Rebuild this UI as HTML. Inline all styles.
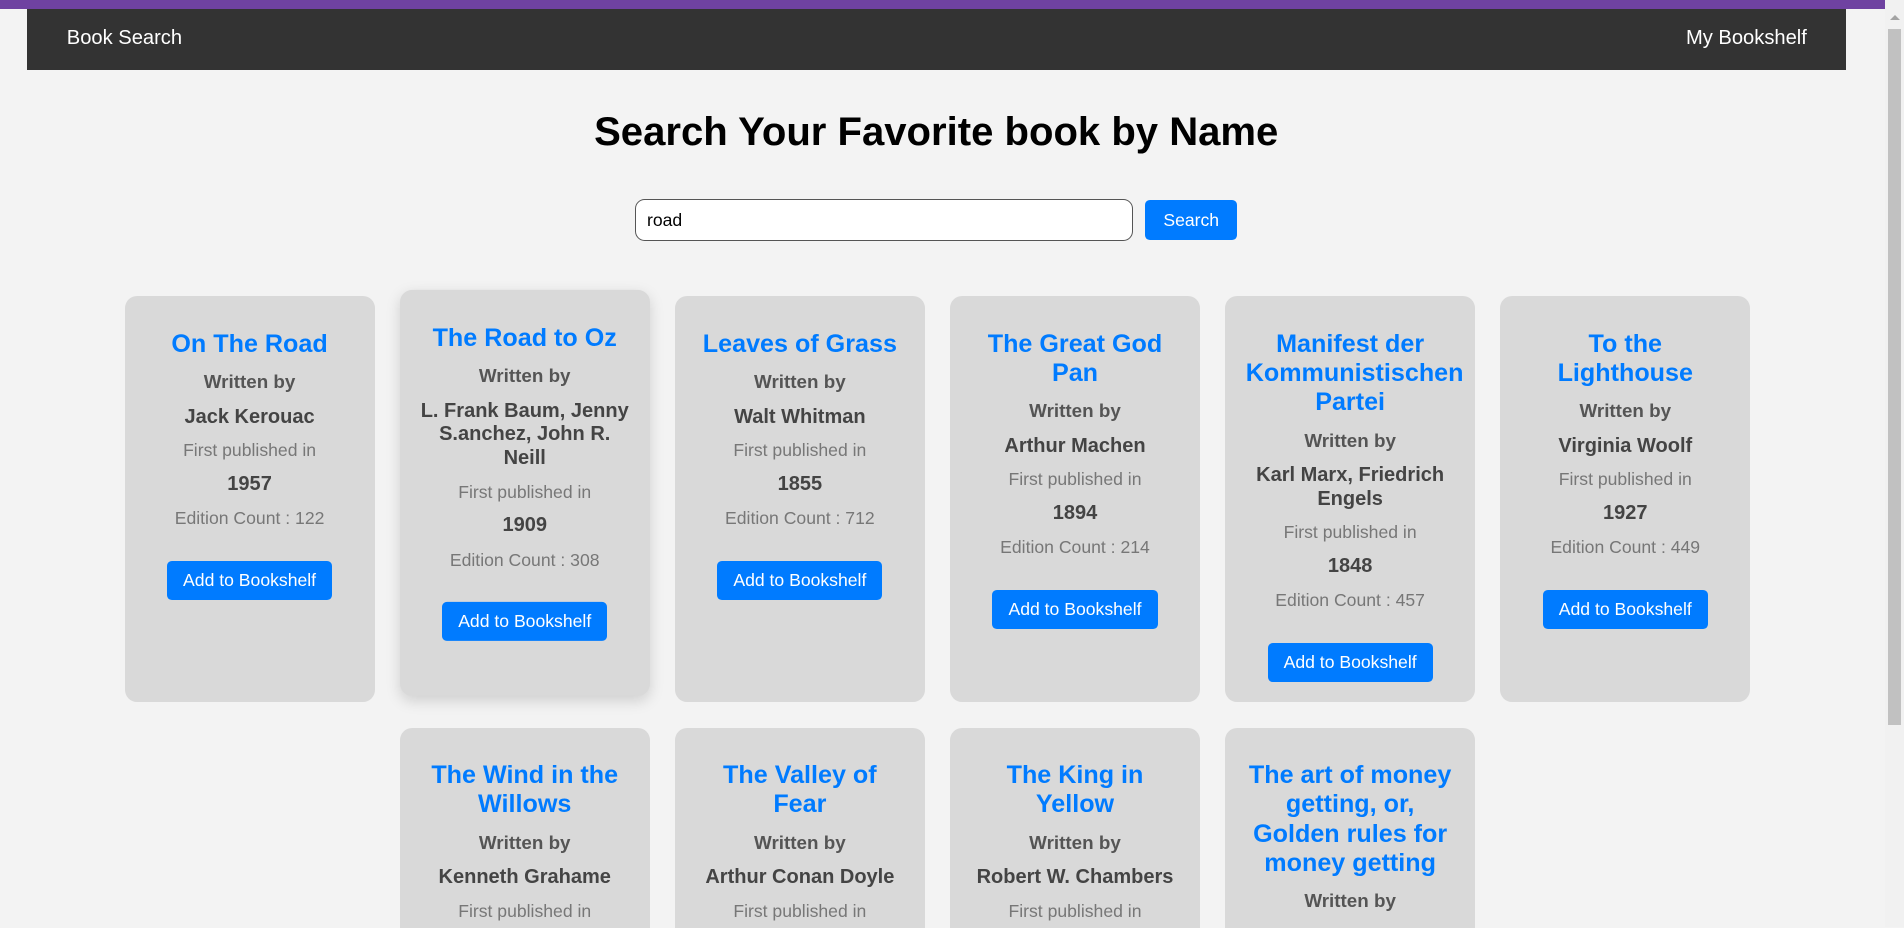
<!DOCTYPE html>
<html><head><meta charset="utf-8"><style>
html,body{margin:0;padding:0;width:1904px;height:927px;overflow:hidden;background:#f3f3f3;font-family:"Liberation Sans",Arial,sans-serif}
#z{zoom:1.2143;position:absolute;left:0;top:0;width:1568px;height:764px;overflow:hidden}
.purple{position:absolute;left:0;top:0;width:1568px;height:7px;background:#6f42a1}
.nav{position:absolute;left:22px;top:7px;width:1498px;height:51px;background:#333;color:#fff;font-size:16.6px}
.nav .l{position:absolute;left:33px;top:15.5px}
.nav .r{position:absolute;right:32px;top:15.5px}
h1{position:absolute;left:0;width:1542px;top:89px;margin:0;text-align:center;font-size:33px;line-height:40px;color:#000}
.inp{position:absolute;left:523px;top:164px;width:408px;height:32.5px;border:1.5px solid #555;border-radius:8px;background:#fff;font-size:14.5px;line-height:32px;box-sizing:content-box}
.inp span{position:absolute;left:9px;top:1px}
.sbtn{position:absolute;left:943px;top:165px;width:76px;height:33px;background:#007bff;border-radius:4px;color:#fff;font-size:14.5px;text-align:center;line-height:33px}
.grid{position:absolute;left:1px;top:244px;width:1542px;display:flex;flex-wrap:wrap;justify-content:center;column-gap:20.6px;row-gap:21px}
.card{width:206px;min-height:333px;background:#d9d9d9;border-radius:10px;box-sizing:border-box;padding:27.5px 17px 17px;text-align:center}
.card.h{transform:translateY(-5px);box-shadow:0 4px 12px rgba(0,0,0,.15)}
.t{font-size:20.7px;font-weight:bold;line-height:24px;color:#007bff}
.w{font-size:15.5px;font-weight:bold;line-height:19px;color:#555;margin-top:9.5px}
.a{font-size:16.5px;font-weight:bold;line-height:19.5px;color:#444;margin-top:10px}
.f{font-size:14.5px;line-height:17px;color:#777;margin-top:9px}
.y{font-size:16.5px;font-weight:bold;line-height:19px;color:#444;margin-top:10px}
.e{font-size:14.5px;line-height:17px;color:#777;margin-top:10px}
.b{display:inline-block;margin-top:26.5px;width:136px;height:32px;line-height:32px;background:#007bff;color:#fff;font-size:14.5px;border-radius:4px}
.sb{position:absolute;left:1885px;top:0;width:19px;height:927px;background:#f1f1f1}
.th{position:absolute;left:3px;top:29px;width:13px;height:696px;background:#c1c1c1}
.ar{position:absolute;left:5px;top:15px;width:0;height:0;border-left:5px solid transparent;border-right:5px solid transparent;border-bottom:5px solid #a3a3a3}
</style></head><body>
<div id="z">
<div class="purple"></div>
<div class="nav"><span class="l">Book Search</span><span class="r">My Bookshelf</span></div>
<h1>Search Your Favorite book by Name</h1>
<div class="inp"><span>road</span></div>
<div class="sbtn">Search</div>
<div class="grid">
<div class="card"><div class="t">On The Road</div><div class="w">Written by</div><div class="a">Jack Kerouac</div><div class="f">First published in</div><div class="y">1957</div><div class="e">Edition Count : 122</div><div class="b">Add to Bookshelf</div></div>
<div class="card h"><div class="t">The Road to Oz</div><div class="w">Written by</div><div class="a">L. Frank Baum, Jenny S.anchez, John R. Neill</div><div class="f">First published in</div><div class="y">1909</div><div class="e">Edition Count : 308</div><div class="b">Add to Bookshelf</div></div>
<div class="card"><div class="t">Leaves of Grass</div><div class="w">Written by</div><div class="a">Walt Whitman</div><div class="f">First published in</div><div class="y">1855</div><div class="e">Edition Count : 712</div><div class="b">Add to Bookshelf</div></div>
<div class="card"><div class="t">The Great God Pan</div><div class="w">Written by</div><div class="a">Arthur Machen</div><div class="f">First published in</div><div class="y">1894</div><div class="e">Edition Count : 214</div><div class="b">Add to Bookshelf</div></div>
<div class="card"><div class="t">Manifest der Kommunistischen Partei</div><div class="w">Written by</div><div class="a">Karl Marx, Friedrich Engels</div><div class="f">First published in</div><div class="y">1848</div><div class="e">Edition Count : 457</div><div class="b">Add to Bookshelf</div></div>
<div class="card"><div class="t">To the Lighthouse</div><div class="w">Written by</div><div class="a">Virginia Woolf</div><div class="f">First published in</div><div class="y">1927</div><div class="e">Edition Count : 449</div><div class="b">Add to Bookshelf</div></div>
<div class="card"><div class="t">The Wind in the Willows</div><div class="w">Written by</div><div class="a">Kenneth Grahame</div><div class="f">First published in</div><div class="y">1908</div><div class="e">Edition Count : 300</div><div class="b">Add to Bookshelf</div></div>
<div class="card"><div class="t">The Valley of Fear</div><div class="w">Written by</div><div class="a">Arthur Conan Doyle</div><div class="f">First published in</div><div class="y">1914</div><div class="e">Edition Count : 200</div><div class="b">Add to Bookshelf</div></div>
<div class="card"><div class="t">The King in Yellow</div><div class="w">Written by</div><div class="a">Robert W. Chambers</div><div class="f">First published in</div><div class="y">1895</div><div class="e">Edition Count : 150</div><div class="b">Add to Bookshelf</div></div>
<div class="card"><div class="t">The art of money getting, or, Golden rules for money getting</div><div class="w">Written by</div><div class="a">P. T. Barnum</div><div class="f">First published in</div><div class="y">1880</div><div class="e">Edition Count : 100</div><div class="b">Add to Bookshelf</div></div>
</div>
</div>
<div class="sb"><div class="ar"></div><div class="th"></div></div>
</body></html>
